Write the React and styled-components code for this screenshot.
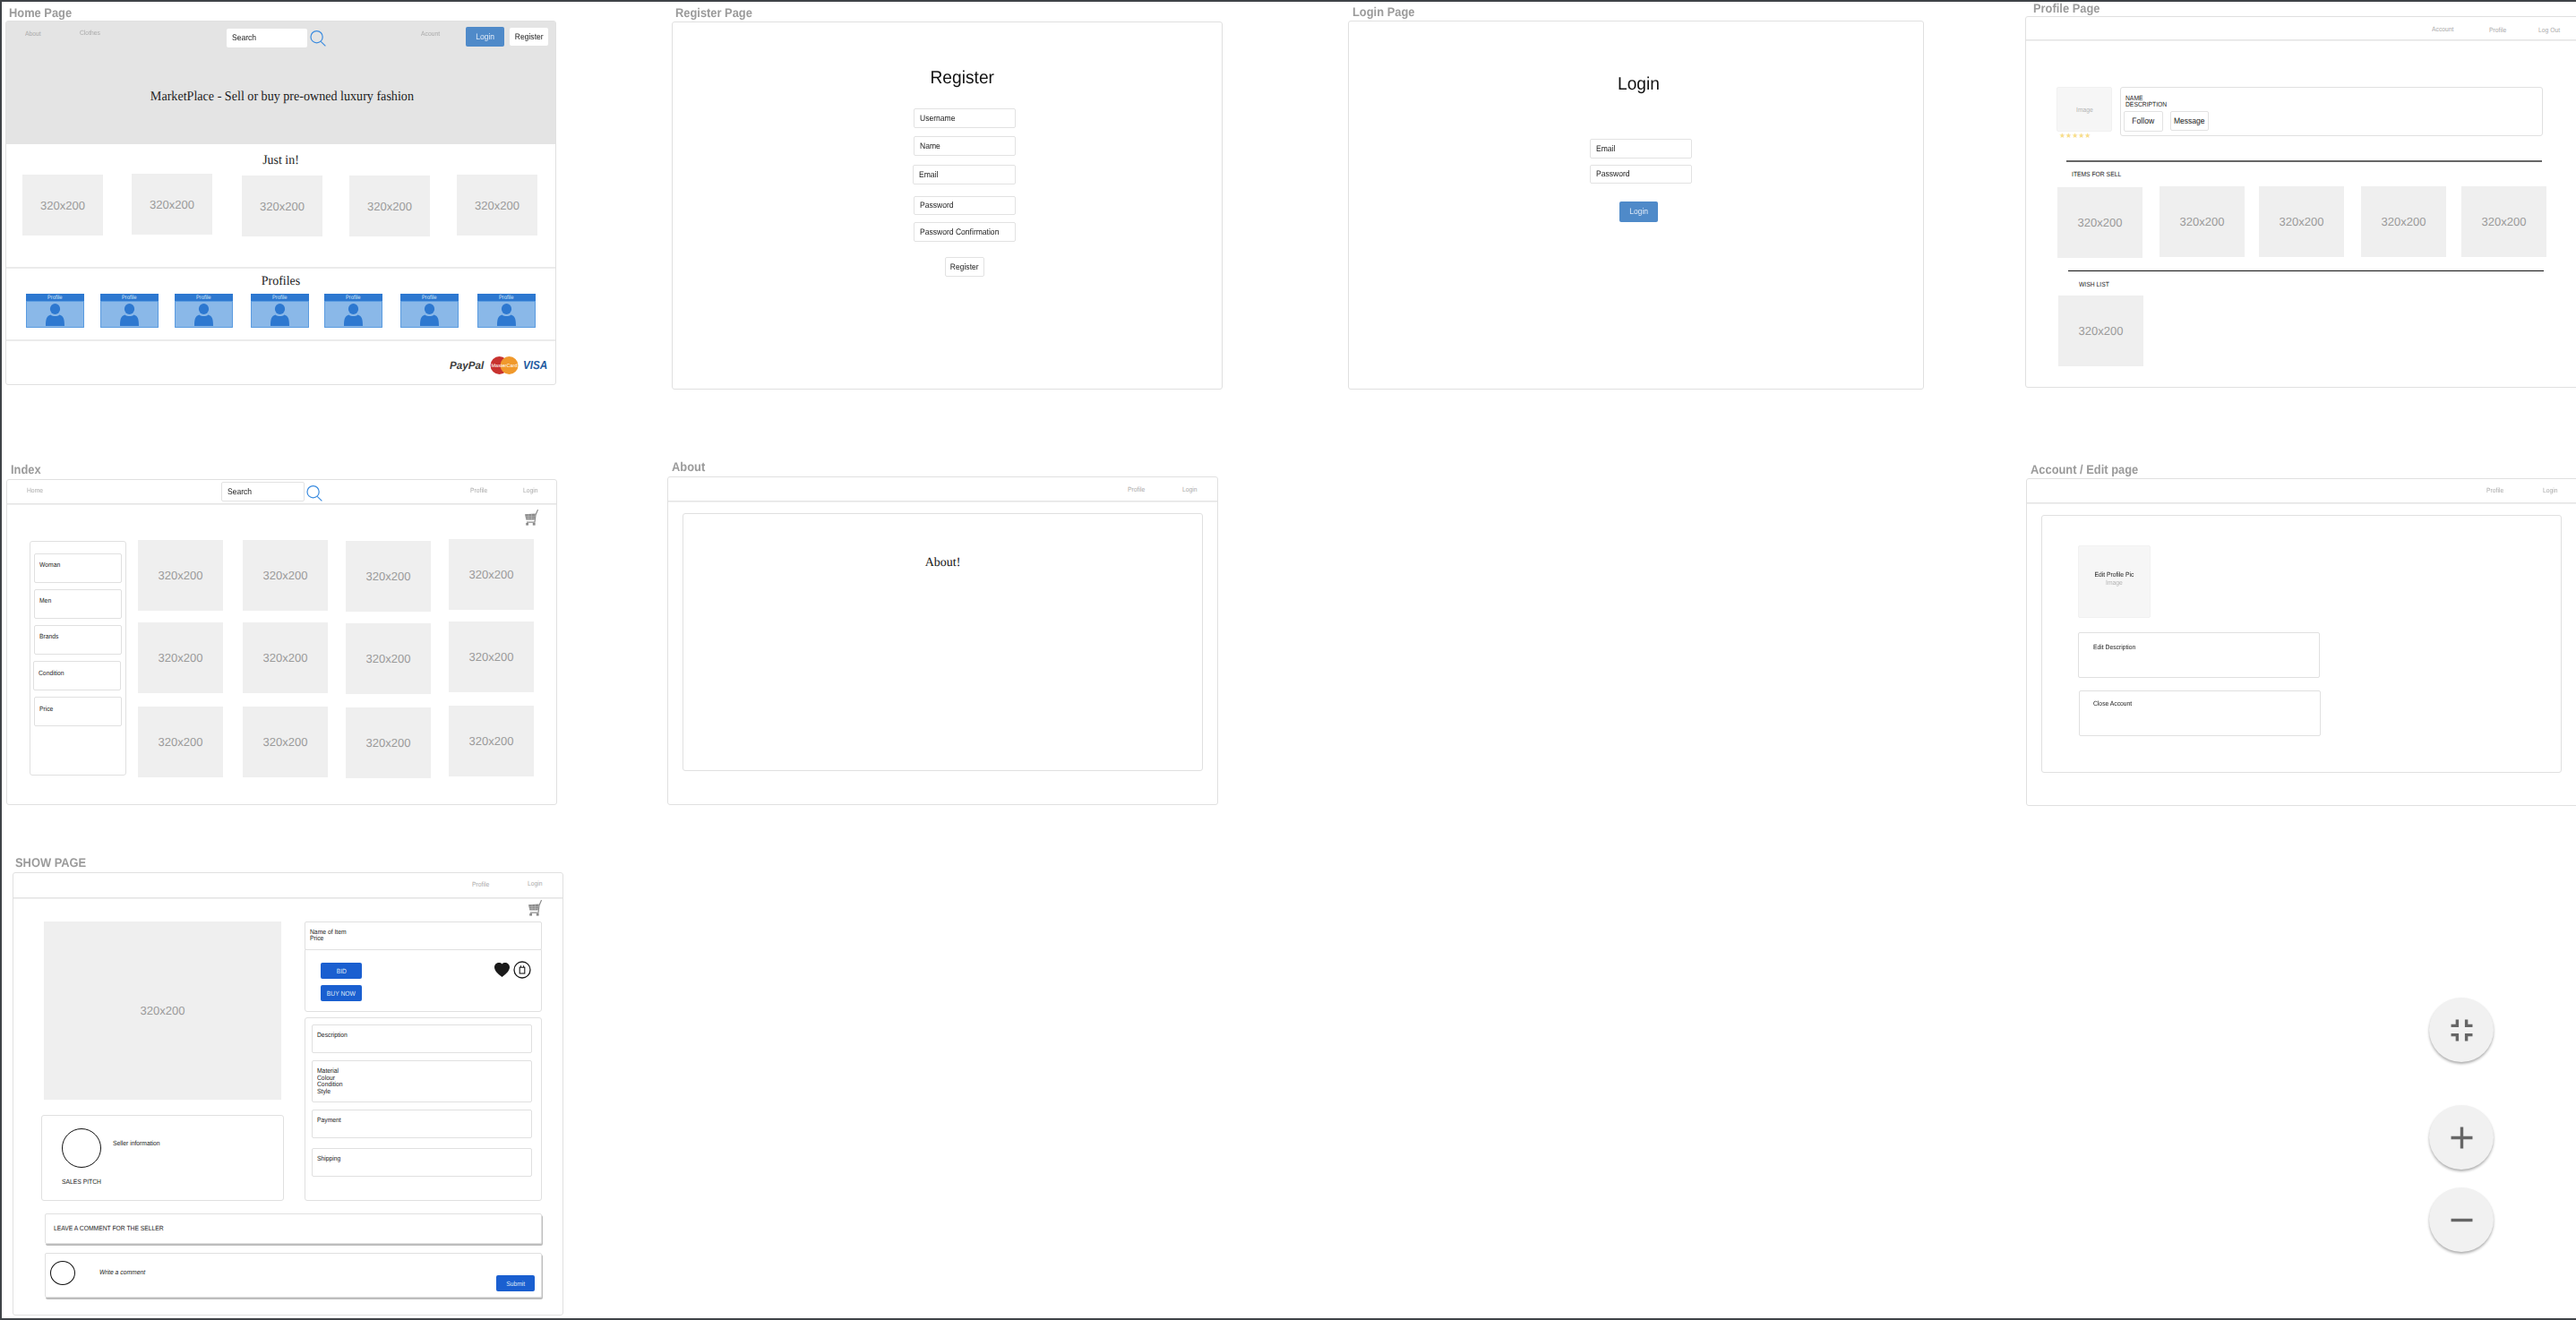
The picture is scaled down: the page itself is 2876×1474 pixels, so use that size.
import styled, { createGlobalStyle, css } from 'styled-components'
import { MdFullscreenExit, MdAdd, MdRemove } from 'react-icons/md'
import { BsHeartFill } from 'react-icons/bs'

const GlobalStyle = createGlobalStyle`
  html, body {
    margin: 0;
    padding: 0;
    background: #fff;
  }
  * {
    box-sizing: border-box;
  }
  body {
    font-family: "Liberation Sans", Arial, sans-serif;
    text-rendering: geometricPrecision;
    overflow: hidden;
  }
`

// text in the mockups is a little narrower than plain Arial
const narrow = css`
  display: inline-block;
  white-space: nowrap;
  transform: scaleX(${p => p.$sx || 0.9});
  transform-origin: left center;
`

const Canvas = styled.div`
  position: relative;
  width: 2876px;
  height: 1474px;
  overflow: hidden;
  background: #fff;

  &::after {
    content: '';
    position: absolute;
    inset: 0;
    border: 2px solid #3f4347;
    border-right: none;
    pointer-events: none;
  }
`

const Board = styled.section`
  position: absolute;
  left: ${p => p.$x}px;
  top: ${p => p.$y}px;
  width: ${p => p.$w}px;
  filter: blur(0.3px);
`

const BoardTitle = styled.h2`
  ${narrow}
  display: block;
  margin: 0 0 ${p => p.$gap}px ${p => p.$indent}px;
  height: 16px;
  font-size: 14px;
  line-height: 16px;
  font-weight: 700;
  color: #9b9b9b;
`

const Frame = styled.div`
  height: ${p => p.$h}px;
  border: 1px solid #e0e0e0;
  border-radius: 3px;
  background: #fff;
`

const Nav = styled.nav`
  display: grid;
  grid-template-columns: ${p => p.$cols};
  align-items: start;
  height: ${p => p.$h}px;
  padding: ${p => p.$pt}px 0 0 ${p => p.$pl}px;
  border-bottom: ${p => (p.$plain ? 'none' : '1px solid #e4e4e4')};
  box-shadow: ${p => (p.$plain ? 'none' : '0 1px 0 #f0f0f0')};
`

const NavLink = styled.a`
  ${narrow}
  margin-top: ${p => p.$mt || 0}px;
  font-size: 7.5px;
  line-height: 10px;
  color: #aaa;
`

const Field = styled.div`
  display: flex;
  align-items: center;
  width: ${p => p.$w || 114}px;
  height: ${p => p.$h || 22}px;
  margin-top: ${p => p.$mt || 0}px;
  margin-left: ${p => p.$ml || 0}px;
  padding-left: 6px;
  background: #fff;
  border: ${p => (p.$flat ? 'none' : '1px solid #e2e2e2')};
  border-radius: 2px;
`

const FieldText = styled.span`
  ${narrow}
  font-size: 9.5px;
  color: #222;
`

const SearchIcon = styled.svg`
  margin-top: ${p => p.$mt || 0}px;
`

const Search = ({ mt }) => (
  <SearchIcon $mt={mt} width='18' height='18' viewBox='0 0 18 18' fill='none' stroke='#3a8bdf'>
    <circle cx='7.6' cy='7.2' r='6.6' strokeWidth='1.2' />
    <path d='M12.2 12.4 17.4 17.4' strokeWidth='1.2' />
  </SearchIcon>
)

const Button = styled.button`
  display: flex;
  align-items: center;
  justify-content: center;
  width: ${p => p.$w}px;
  height: ${p => p.$h}px;
  margin-top: ${p => p.$mt || 0}px;
  margin-left: ${p => p.$ml || 0}px;
  padding: 0;
  font-family: inherit;
  font-size: ${p => p.$size || 9.5}px;
  text-rendering: geometricPrecision;
  color: ${p => (p.$bg ? '#dfe9f7' : '#222')};
  background: ${p => p.$bg || '#fff'};
  border: ${p => (p.$bg || p.$flat ? 'none' : '1px solid #e2e2e2')};
  border-radius: 2px;
`

const SubmitButton = styled(Button)`
  flex: none;
  margin-right: 7px;
`

const ButtonText = styled.span`
  ${narrow}
  transform-origin: center;
`

const HeroTitle = styled.h1`
  ${narrow}
  transform-origin: center;
  display: block;
  margin: 44px 0 0;
  padding-left: 3px;
  font-family: "Liberation Serif", "Times New Roman", serif;
  font-size: 15px;
  line-height: 20px;
  font-weight: 400;
  text-align: center;
  color: #1c1c1c;
`

const Hero = styled.header`
  height: 137px;
  padding-top: 6px;
  background: #e4e4e4;
`

const Section = styled.div`
  height: ${p => p.$h}px;
  padding-top: ${p => p.$pt}px;
  border-bottom: 2px solid #ebebeb;
`

const SectionTitle = styled.h3`
  ${narrow}
  transform-origin: center;
  display: block;
  margin: 0;
  font-family: "Liberation Serif", "Times New Roman", serif;
  font-size: 14.5px;
  line-height: 18px;
  font-weight: 400;
  text-align: center;
  color: #1c1c1c;
`

const ThumbRow = styled.div`
  display: grid;
  grid-template-columns: ${p => p.$cols};
  align-items: start;
  margin-top: ${p => p.$mt}px;
  padding-left: ${p => p.$pl}px;
`

const Thumb = styled.div`
  display: flex;
  align-items: center;
  justify-content: center;
  width: ${p => p.$w}px;
  height: ${p => p.$h}px;
  margin-top: ${p => p.$mt || 0}px;
  margin-left: ${p => p.$ml || 0}px;
  background: #efefef;
`

const ThumbText = styled.span`
  font-size: 13px;
  color: #9a9a9a;
`

const ProfileCard = styled.div`
  display: flex;
  flex-direction: column;
  align-items: center;
  width: 65px;
  height: 38px;
  background: #8ab8e8;
  border: 1px solid #5a9be0;
  border-top: none;
  border-radius: 1px;
`

const ProfileHead = styled.div`
  display: flex;
  justify-content: center;
  align-items: center;
  width: 65px;
  height: 9px;
  margin-bottom: 2px;
  flex: none;
  background: #2d78d0;
  border-bottom: 1px solid #5a9be0;
  font-size: 6.5px;
  color: #d5e5f7;
`

const ProfileName = styled.span`
  ${narrow}
  transform-origin: center;
`

const Footer = styled.footer`
  display: grid;
  grid-template-columns: 45px 37px 27px;
  align-items: center;
  height: 47px;
  padding: 6px 0 0 495px;
`

const PayPal = styled.span`
  ${narrow}
  font-size: 12px;
  font-weight: 700;
  font-style: italic;
  color: #3c3c3c;
`

const Visa = styled.span`
  ${narrow}
  font-size: 13px;
  font-weight: 700;
  font-style: italic;
  color: #1d5aa0;
`

const Form = styled.div`
  display: flex;
  flex-direction: column;
  align-items: flex-start;
  width: 114px;
  margin-left: 269px;
  padding-top: ${p => p.$pt}px;
`

const Heading = styled.h1`
  ${narrow}
  transform-origin: center;
  align-self: center;
  margin: 0 0 0 -6px;
  font-size: 20px;
  line-height: 24px;
  font-weight: 400;
  color: #111;
`

const ProfileTop = styled.div`
  display: flex;
  gap: 9px;
  height: 62px;
  margin: 52px 0 0 34px;
`

const Avatar = styled.div`
  display: flex;
  flex-direction: column;
  align-items: center;
  width: ${p => p.$w}px;
  height: ${p => p.$h}px;
  justify-content: ${p => (p.$pt ? 'flex-start' : 'center')};
  padding-top: ${p => p.$pt || 0}px;
  background: #f6f6f6;
  border: 1px solid #f1f1f1;
  border-radius: 2px;
`

const ImageText = styled.span`
  ${narrow}
  transform-origin: center;
  font-size: 7.5px;
  line-height: 9px;
  color: ${p => (p.$dark ? '#222' : '#b4b4b4')};
`

const Stars = styled.div`
  margin: 0 0 0 3px;
  font-family: "DejaVu Sans", sans-serif;
  font-size: 7.9px;
  line-height: 10px;
  color: #f7dd8a;
`

const InfoBox = styled.div`
  width: 472px;
  height: 55px;
  padding: 8px 0 0 5px;
  border: 1px solid #e0e0e0;
  border-radius: 3px;
`

const Small = styled.p`
  ${narrow}
  display: block;
  margin: ${p => p.$mt || 0}px 0 0 ${p => p.$ml || 0}px;
  font-size: 7.5px;
  line-height: ${p => p.$lh || 10}px;
  font-style: ${p => (p.$italic ? 'italic' : 'normal')};
  color: #222;
`

const WriteText = styled(Small)`
  flex: 1;
`

const ButtonRow = styled.div`
  display: flex;
  gap: 8px;
  align-items: flex-start;
  margin: 4px 0 0 -2px;
`

const Rule = styled.hr`
  width: 531px;
  height: ${p => p.$h}px;
  margin: ${p => p.$mt}px 0 0 ${p => p.$ml}px;
  border: none;
  background: ${p => p.$color};
`

const CartRow = styled.div`
  height: 18px;
  margin: ${p => p.$mt}px 0 0 ${p => p.$ml}px;
`

const Cart = () => (
  <svg width='15' height='18' viewBox='0 0 15 18'>
    <path d='M14.6 0 12 6 11 14.2H2' fill='none' stroke='#8a8a8a' strokeWidth='1.2' />
    <path d='M0 5.2 11.8 4.4 10.6 11.6H1.4Z' fill='#8a8a8a' />
    <path d='M0.6 7.6H11.4M1 9.6H11M4 5V11.6M7.4 4.8V11.6' stroke='#c9c9c9' strokeWidth='0.5' />
    <rect x='1.2' y='15' width='2.8' height='2.6' fill='#8a8a8a' />
    <rect x='8.8' y='15' width='2.8' height='2.6' fill='#8a8a8a' />
  </svg>
)

const ShopGrid = styled.div`
  display: grid;
  grid-template-columns: 121px 117px 115px 115px 95px;
  grid-template-rows: 92px 94px 79px;
  margin: 15px 0 0 25px;
`

const Sidebar = styled.aside`
  grid-row: 1 / 4;
  display: flex;
  flex-direction: column;
  gap: 7px;
  width: 108px;
  height: 262px;
  margin-top: 2px;
  padding: 13px 0 0 4px;
  border: 1px solid #e0e0e0;
  border-radius: 3px;
`

// bordered wireframe box with a line or two of text in it
const TextBox = styled.div`
  width: ${p => p.$w}px;
  height: ${p => p.$h}px;
  margin-top: ${p => p.$mt || 0}px;
  margin-left: ${p => p.$ml || 0}px;
  padding: ${p => p.$pt || 0}px 0 0 ${p => p.$pl || 0}px;
  border: 1px solid #e0e0e0;
  border-radius: 2px;
  box-shadow: ${p => (p.$raised ? '1px 2px 0 #bdbdbd' : 'none')};
`

const InnerPanel = styled.div`
  display: flex;
  flex-direction: column;
  align-items: ${p => (p.$center ? 'center' : 'flex-start')};
  width: 581px;
  height: 288px;
  margin: 13px 0 0 ${p => p.$ml}px;
  padding: ${p => p.$pt}px 0 0 ${p => p.$pl || 0}px;
  border: 1px solid #e0e0e0;
  border-radius: 3px;
`

const AboutText = styled.h1`
  margin: 0;
  font-family: "Liberation Serif", "Times New Roman", serif;
  font-size: 14px;
  line-height: 20px;
  font-weight: 400;
  color: #111;
`

const ShowMain = styled.div`
  display: flex;
  gap: 23px;
  margin: 6px 0 0 31px;
`

const Column = styled.div`
  display: flex;
  flex-direction: column;
  width: ${p => p.$w}px;
`

const SellerBox = styled.div`
  width: 271px;
  height: 96px;
  margin-top: 17px;
  padding: 14px 0 0 22px;
  border: 1px solid #e0e0e0;
  border-radius: 3px;
`

const SellerRow = styled.div`
  display: flex;
  gap: 13px;
  align-items: flex-start;
`

const Circle = styled.div`
  flex: none;
  width: ${p => p.$w}px;
  height: ${p => p.$h}px;
  margin: ${p => p.$mt || 0}px 0 0 ${p => p.$ml || 0}px;
  border: 1.3px solid #111;
  border-radius: 50%;
`

const ActionBox = styled.div`
  display: flex;
  justify-content: space-between;
  height: 70px;
  margin-top: -1px;
  padding: 14px 11px 0 17px;
  border: 1px solid #e0e0e0;
  border-radius: 0 0 3px 3px;
`

const ActionButtons = styled.div`
  display: flex;
  flex-direction: column;
  gap: 7px;
`

const ActionIcons = styled.div`
  display: flex;
  align-items: center;
  gap: 4px;
  height: 20px;
  margin-top: -2px;
  color: #1a1a1a;
`

const DetailBox = styled.div`
  height: 205px;
  margin-top: 6px;
  padding: 7px 0 0 7px;
  border: 1px solid #e0e0e0;
  border-radius: 3px;
`

const CommentRow = styled.div`
  display: flex;
  align-items: flex-start;
  width: 555px;
  height: 50px;
  margin: 10px 0 0 35px;
  border: 1px solid #e0e0e0;
  border-radius: 2px;
  box-shadow: 1px 2px 0 #bdbdbd;
`

const ZoomRail = styled.div`
  position: absolute;
  left: 2712px;
  top: 1114px;
  display: flex;
  flex-direction: column;
`

const ZoomButton = styled.button`
  display: flex;
  align-items: center;
  justify-content: center;
  width: 72px;
  height: 72px;
  margin-top: ${p => p.$mt || 0}px;
  padding: 0;
  color: #666;
  background: #f1f1f1;
  border: none;
  border-radius: 50%;
  box-shadow: 0 2px 3px rgba(0, 0, 0, 0.32);
`

const Person = () => (
  <svg width='21' height='25' viewBox='0 0 21 25' fill='#2d78d0'>
    <ellipse cx='10.5' cy='6' rx='5.6' ry='6' />
    <path d='M0 25C0 17.5.8 14 5.4 12.4 8 14.4 13 14.4 15.6 12.4 20.2 14 21 17.5 21 25Z' />
  </svg>
)

const MasterCard = () => (
  <svg width='32' height='20' viewBox='0 0 32 20'>
    <circle cx='10.5' cy='10' r='10' fill='#c8322f' />
    <circle cx='21.5' cy='10' r='10' fill='#f0992c' />
    <text x='16' y='11.8' fontSize='5.4' textAnchor='middle' textLength='29' lengthAdjust='spacingAndGlyphs' fill='#fff' fontFamily='Liberation Sans'>
      MasterCard
    </text>
  </svg>
)

const BagBadge = () => (
  <svg width='20' height='20' viewBox='0 0 20 20' fill='none' stroke='#1a1a1a'>
    <circle cx='10' cy='10' r='9' strokeWidth='1.3' />
    <rect x='7.2' y='7.2' width='5.6' height='6.8' strokeWidth='1.1' />
    <path d='M8.4 7V5.2M11.6 7V5.2' strokeWidth='1' />
  </svg>
)

const Placeholder = props => (
  <Thumb $w={95} $h={79} {...props}>
    <ThumbText>320x200</ThumbText>
  </Thumb>
)

const shopRows = [0, 1, 2]
const shopColumns = [1, 1, 2, 0]

function HomePage() {
  return (
    <Board $x={6} $y={6} $w={615}>
      <BoardTitle $sx={0.92} $indent={4} $gap={1}>Home Page</BoardTitle>
      <Frame $h={407}>
        <Hero>
          <Nav $plain $h={24} $pt={0} $pl={21} $cols='61px 164px 93px 124px 50px 49px 43px'>
            <NavLink $mt={3}>About</NavLink>
            <NavLink $mt={2}>Clothes</NavLink>
            <Field $flat $w={90} $h={21} $mt={2}><FieldText>Search</FieldText></Field>
            <Search mt={4} />
            <NavLink $mt={3}>Acount</NavLink>
            <Button $w={43} $h={22} $bg='#4f8ac9'><ButtonText>Login</ButtonText></Button>
            <Button $w={43} $h={20} $mt={1} $flat><ButtonText>Register</ButtonText></Button>
          </Nav>
          <HeroTitle $sx={0.94}>MarketPlace - Sell or buy pre-owned luxury fashion</HeroTitle>
        </Hero>
        <Section $h={139} $pt={9}>
          <SectionTitle $sx={0.96}>Just in!</SectionTitle>
          <ThumbRow $mt={6} $pl={18} $cols='122px 123px 120px 120px 90px'>
            {[1, 0, 2, 2, 1].map((top, i) => (
              <Thumb key={i} $w={90} $h={68} $mt={top}><ThumbText>320x200</ThumbText></Thumb>
            ))}
          </ThumbRow>
        </Section>
        <Section $h={81} $pt={5}>
          <SectionTitle $sx={0.96}>Profiles</SectionTitle>
          <ThumbRow $mt={5} $pl={22} $cols='83px 83px 85px 82px 85px 86px 65px'>
            {[0, 1, 2, 3, 4, 5, 6].map(i => (
              <ProfileCard key={i}>
                <ProfileHead><ProfileName>Profile</ProfileName></ProfileHead>
                <Person />
              </ProfileCard>
            ))}
          </ThumbRow>
        </Section>
        <Footer>
          <PayPal $sx={0.97}>PayPal</PayPal>
          <MasterCard />
          <Visa>VISA</Visa>
        </Footer>
      </Frame>
    </Board>
  )
}

function RegisterPage() {
  return (
    <Board $x={750} $y={6} $w={615}>
      <BoardTitle $sx={0.92} $indent={4} $gap={2}>Register Page</BoardTitle>
      <Frame $h={411}>
        <Form $pt={50}>
          <Heading $sx={0.96}>Register</Heading>
          <Field $mt={22}><FieldText>Username</FieldText></Field>
          <Field $mt={9}><FieldText>Name</FieldText></Field>
          <Field $mt={10} $ml={-1} $w={115}><FieldText>Email</FieldText></Field>
          <Field $mt={13} $h={21}><FieldText>Password</FieldText></Field>
          <Field $mt={8}><FieldText>Password Confirmation</FieldText></Field>
          <Button $w={44} $h={22} $mt={17} $ml={35}><ButtonText>Register</ButtonText></Button>
        </Form>
      </Frame>
    </Board>
  )
}

function LoginPage() {
  return (
    <Board $x={1505} $y={5} $w={643}>
      <BoardTitle $sx={0.92} $indent={5} $gap={2}>Login Page</BoardTitle>
      <Frame $h={412}>
        <Form $pt={58}>
          <Heading $sx={0.96}>Login</Heading>
          <Field $mt={49}><FieldText>Email</FieldText></Field>
          <Field $mt={7} $h={21}><FieldText>Password</FieldText></Field>
          <Button $w={43} $h={23} $mt={20} $ml={33} $bg='#4f8ac9'><ButtonText>Login</ButtonText></Button>
        </Form>
      </Frame>
    </Board>
  )
}

function ProfilePage() {
  return (
    <Board $x={2261} $y={1} $w={700}>
      <BoardTitle $sx={0.92} $indent={9} $gap={1}>Profile Page</BoardTitle>
      <Frame $h={415}>
        <Nav $h={26} $pt={9} $pl={453} $cols='64px 55px 40px'>
          <NavLink>Account</NavLink>
          <NavLink $mt={1}>Profile</NavLink>
          <NavLink $mt={1}>Log Out</NavLink>
        </Nav>
        <ProfileTop>
          <div>
            <Avatar $w={62} $h={50}><ImageText>Image</ImageText></Avatar>
            <Stars>★★★★★</Stars>
          </div>
          <InfoBox>
            <Small $lh={7}>NAME</Small>
            <Small $lh={7}>DESCRIPTION</Small>
            <ButtonRow>
              <Button $w={44} $h={23}><ButtonText>Follow</ButtonText></Button>
              <Button $w={43} $h={22}><ButtonText>Message</ButtonText></Button>
            </ButtonRow>
          </InfoBox>
        </ProfileTop>
        <Rule $h={2} $mt={20} $ml={45} $color='#666' />
        <Small $mt={10} $ml={51} $lh={8}>ITEMS FOR SELL</Small>
        <ThumbRow $mt={9} $pl={35} $cols='114px 111px 114px 112px 95px'>
          {[1, 0, 0, 0, 0].map((top, i) => <Placeholder key={i} $mt={top} />)}
        </ThumbRow>
        <Rule $h={1} $mt={14} $ml={47} $color='#111' />
        <Small $mt={11} $ml={59} $lh={8}>WISH LIST</Small>
        <Placeholder $mt={8} $ml={36} />
      </Frame>
    </Board>
  )
}

function IndexPage() {
  const filters = [
    { name: 'Woman', ml: 0, pt: 7 },
    { name: 'Men', ml: 0, pt: 7 },
    { name: 'Brands', ml: 0, pt: 7 },
    { name: 'Condition', ml: -1, pt: 8 },
    { name: 'Price', ml: 0, pt: 8 },
  ]
  return (
    <Board $x={7} $y={516} $w={615}>
      <BoardTitle $sx={0.92} $indent={5} $gap={3}>Index</BoardTitle>
      <Frame $h={364}>
        <Nav $h={27} $pt={2} $pl={22} $cols='217px 95px 183px 59px 40px'>
          <NavLink $mt={5}>Home</NavLink>
          <Field $w={93}><FieldText>Search</FieldText></Field>
          <Search mt={4} />
          <NavLink $mt={5}>Profile</NavLink>
          <NavLink $mt={5}>Login</NavLink>
        </Nav>
        <CartRow $mt={6} $ml={578}><Cart /></CartRow>
        <ShopGrid>
          <Sidebar>
            {filters.map(f => (
              <TextBox key={f.name} $w={98} $h={33} $ml={f.ml} $pt={f.pt} $pl={5}>
                <Small>{f.name}</Small>
              </TextBox>
            ))}
          </Sidebar>
          {shopRows.map(row =>
            shopColumns.map((top, col) => (
              <Thumb key={row + '-' + col} $w={95} $h={79} $mt={top}>
                <ThumbText>320x200</ThumbText>
              </Thumb>
            ))
          )}
        </ShopGrid>
      </Frame>
    </Board>
  )
}

function AboutPage() {
  return (
    <Board $x={745} $y={513} $w={615}>
      <BoardTitle $sx={0.92} $indent={5} $gap={3}>About</BoardTitle>
      <Frame $h={367}>
        <Nav $h={27} $pt={9} $pl={513} $cols='61px 40px'>
          <NavLink>Profile</NavLink>
          <NavLink>Login</NavLink>
        </Nav>
        <InnerPanel $center $ml={16} $pt={45}>
          <AboutText>About!</AboutText>
        </InnerPanel>
      </Frame>
    </Board>
  )
}

function AccountPage() {
  return (
    <Board $x={2262} $y={516} $w={700}>
      <BoardTitle $sx={0.92} $indent={5} $gap={2}>Account / Edit page</BoardTitle>
      <Frame $h={366}>
        <Nav $h={27} $pt={8} $pl={513} $cols='63px 40px'>
          <NavLink>Profile</NavLink>
          <NavLink>Login</NavLink>
        </Nav>
        <InnerPanel $ml={16} $pt={33} $pl={40}>
          <Avatar $w={81} $h={81} $pt={27}>
            <ImageText $dark>Edit Profile Pic</ImageText>
            <ImageText>Image</ImageText>
          </Avatar>
          <TextBox $w={270} $h={51} $mt={16} $pt={11} $pl={16}><Small>Edit Description</Small></TextBox>
          <TextBox $w={270} $h={51} $mt={14} $ml={1} $pt={9} $pl={15}><Small>Close Account</Small></TextBox>
        </InnerPanel>
      </Frame>
    </Board>
  )
}

function ShowPage() {
  return (
    <Board $x={14} $y={955} $w={615}>
      <BoardTitle $sx={0.92} $indent={3} $gap={3}>SHOW PAGE</BoardTitle>
      <Frame $h={495}>
        <Nav $h={28} $pt={8} $pl={512} $cols='62px 40px'>
          <NavLink>Profile</NavLink>
          <NavLink $mt={-1}>Login</NavLink>
        </Nav>
        <CartRow $mt={2} $ml={575}><Cart /></CartRow>
        <ShowMain>
          <Column $w={271}>
            <Thumb $w={265} $h={199} $ml={3}><ThumbText>320x200</ThumbText></Thumb>
            <SellerBox>
              <SellerRow>
                <Circle $w={44} $h={44} />
                <Small $mt={12}>Seller information</Small>
              </SellerRow>
              <Small $mt={11}>SALES PITCH</Small>
            </SellerBox>
          </Column>
          <Column $w={265}>
            <TextBox $w={265} $h={32} $pt={7} $pl={5}>
              <Small $lh={7}>Name of Item</Small>
              <Small $lh={7}>Price</Small>
            </TextBox>
            <ActionBox>
              <ActionButtons>
                <Button $w={46} $h={18} $bg='#1a5fd0' $size={7.5}><ButtonText>BID</ButtonText></Button>
                <Button $w={46} $h={18} $bg='#1a5fd0' $size={7.5}><ButtonText>BUY NOW</ButtonText></Button>
              </ActionButtons>
              <ActionIcons>
                <BsHeartFill size={17} />
                <BagBadge />
              </ActionIcons>
            </ActionBox>
            <DetailBox>
              <TextBox $w={246} $h={32} $pt={6} $pl={5}><Small>Description</Small></TextBox>
              <TextBox $w={246} $h={47} $mt={8} $pt={7} $pl={5}>
                <Small $lh={7.7}>Material</Small>
                <Small $lh={7.7}>Colour</Small>
                <Small $lh={7.7}>Condition</Small>
                <Small $lh={7.7}>Style</Small>
              </TextBox>
              <TextBox $w={246} $h={32} $mt={8} $pt={6} $pl={5}><Small>Payment</Small></TextBox>
              <TextBox $w={246} $h={32} $mt={11} $pt={6} $pl={5}><Small>Shipping</Small></TextBox>
            </DetailBox>
          </Column>
        </ShowMain>
        <TextBox $raised $w={555} $h={34} $mt={14} $ml={35} $pt={11} $pl={9}>
          <Small>LEAVE A COMMENT FOR THE SELLER</Small>
        </TextBox>
        <CommentRow>
          <Circle $w={28} $h={27} $mt={8} $ml={5} />
          <WriteText $italic $mt={16} $ml={27}>Write a comment</WriteText>
          <SubmitButton $w={43} $h={18} $mt={24} $bg='#1a5fd0' $size={7.5}><ButtonText>Submit</ButtonText></SubmitButton>
        </CommentRow>
      </Frame>
    </Board>
  )
}

export default function App() {
  return (
    <Canvas>
      <GlobalStyle />
      <HomePage />
      <RegisterPage />
      <LoginPage />
      <ProfilePage />
      <IndexPage />
      <AboutPage />
      <AccountPage />
      <ShowPage />
      <ZoomRail>
        <ZoomButton><MdFullscreenExit size={41} /></ZoomButton>
        <ZoomButton $mt={48}><MdAdd size={41} /></ZoomButton>
        <ZoomButton $mt={20}><MdRemove size={41} /></ZoomButton>
      </ZoomRail>
    </Canvas>
  )
}
